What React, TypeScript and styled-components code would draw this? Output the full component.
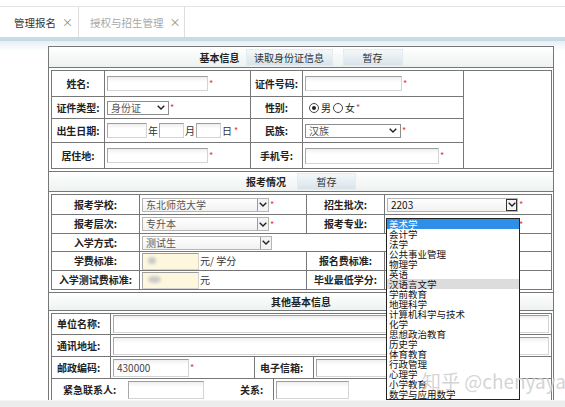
import styled, { createGlobalStyle } from 'styled-components';

const GlobalStyle = createGlobalStyle`
  html, body {
    margin: 0;
    padding: 0;
    background: #fff;
    overflow: hidden;
  }
  body {
    font-family: "Noto Sans CJK SC", "Liberation Sans", sans-serif;
    font-size: 10px;
    color: #222;
  }
`;

const Page = styled.div`
  width: 565px;
  height: 407px;
  overflow: hidden;
  position: relative;
`;

const TabBar = styled.div`
  margin-top: 6px;
  height: 30px;
  border-top: 1px solid #e4e4e4;
  border-bottom: 4px solid #c6dbe6;
  display: flex;
`;

const Tab = styled.div<{ $active?: boolean; $w: number }>`
  width: ${p => p.$w}px;
  box-sizing: border-box;
  display: flex;
  align-items: center;
  gap: 6px;
  padding-left: ${p => (p.$active ? 14 : 11)}px;
  border-right: 1px solid #dedede;
  color: ${p => (p.$active ? '#333' : '#a8a8a8')};
  font-size: 10.5px;
`;

const Close = styled.span`
  font-size: 11px;
  color: #888;
`;

const Content = styled.div`
  background: linear-gradient(#e6eff3 0, #fff 10px);
  padding-top: 5px;
`;

const Frame = styled.div`
  margin-left: 48px;
  width: 504px;
  border: 1px solid #777;
  border-bottom: none;
`;

const Section = styled.div`
  border-bottom: 1px solid #777;
`;

const SectionHead = styled.div<{ $h: number }>`
  height: ${p => p.$h}px;
  display: flex;
  align-items: center;
  justify-content: center;
  gap: 6px;
  background: linear-gradient(#ffffff, #edf2f1);
  border-bottom: 1px solid #777;
  font-weight: bold;
`;

const SectionBody = styled.div`
  padding: 2px;
`;

const Btn = styled.button<{ $w: number; $ml?: number }>`
  width: ${p => p.$w}px;
  height: 17px;
  margin-left: ${p => p.$ml ?? 0}px;
  padding: 0;
  border: none;
  background: linear-gradient(#f6f9fb, #d6e3ea);
  box-shadow: inset 0 0 0 1px #e4ecf0;
  font-family: inherit;
  font-size: 10px;
  color: #333;
`;

const Grid = styled.table`
  width: 100%;
  border-collapse: collapse;
  table-layout: fixed;
  line-height: 12px;
`;

const Col = styled.col<{ $w: number }>`
  width: ${p => p.$w}px;
`;

const Row = styled.tr<{ $h: number }>`
  height: ${p => p.$h}px;
`;

const Label = styled.td<{ $left?: boolean }>`
  border: 1px solid #777;
  padding: ${p => (p.$left ? '0 0 0 5px' : '0')};
  text-align: ${p => (p.$left ? 'left' : 'center')};
  font-weight: bold;
  color: #222;
  white-space: nowrap;
`;

const Value = styled.td`
  border: 1px solid #777;
  padding: 0 2px;
  white-space: nowrap;
  position: relative;
`;

const Line = styled.div`
  display: flex;
  align-items: center;
`;

const Field = styled.input<{ $w: number; $h?: number; $yellow?: boolean }>`
  display: block;
  box-sizing: border-box;
  width: ${p => p.$w}px;
  height: ${p => p.$h ?? 15}px;
  margin: 0;
  padding: 0 3px;
  border: 1px solid;
  border-color: #9c9c9c #d4d4d4 #d4d4d4 #a8a8a8;
  background: ${p =>
    p.$yellow ? '#fdf7de' : 'linear-gradient(#efefef, #ffffff 5px)'};
  font-family: inherit;
  font-size: 10px;
  color: #444;
  outline: none;
`;

const Blur = styled.span<{ $w: number }>`
  position: absolute;
  left: 6px;
  top: 50%;
  width: ${p => p.$w}px;
  height: 7px;
  margin-top: -4px;
  border-radius: 50%;
  background: #c9c9c9;
  filter: blur(1.5px);
`;

const FieldWrap = styled.span`
  position: relative;
  display: inline-flex;
`;

const Req = styled.span`
  color: #e23a3a;
  font-size: 9px;
  margin-left: 1px;
  line-height: 1;
`;

const Unit = styled.span`
  margin: 0 1px;
  color: #333;
`;

const Spacer = styled.span<{ $w: number }>`
  display: inline-block;
  width: ${p => p.$w}px;
  flex: none;
`;

const SelectBox = styled.div<{ $w: number; $boxed?: boolean; $focus?: boolean }>`
  box-sizing: border-box;
  width: ${p => p.$w}px;
  height: 14px;
  display: flex;
  align-items: center;
  justify-content: space-between;
  padding-left: 3px;
  border: 1px solid ${p => (p.$boxed ? '#b5b5b5' : '#8d8d8d')};
  background: ${p => (p.$boxed ? 'linear-gradient(#ffffff, #f1f1f1)' : '#fff')};
  color: ${p => (p.$focus ? '#111' : '#555')};
`;

const Arrow = styled.span<{ $boxed?: boolean; $focus?: boolean }>`
  box-sizing: border-box;
  width: ${p => (p.$boxed ? 11 : 14)}px;
  height: 12px;
  display: flex;
  align-items: center;
  justify-content: center;
  border-left: ${p => (p.$boxed ? `1px solid ${p.$focus ? '#333' : '#999'}` : 'none')};
  ${p => (p.$focus ? 'outline: 1px solid #333; outline-offset: -1px;' : '')}
  background: ${p => (p.$boxed ? '#f4f4f4' : 'transparent')};
`;

const Select = ({ w, text, boxed, focus }: { w: number; text: string; boxed?: boolean; focus?: boolean }) => (
  <SelectBox $w={w} $boxed={boxed} $focus={focus}>
    <span>{text}</span>
    <Arrow $boxed={boxed} $focus={focus}>
      <svg width="8" height="5" viewBox="0 0 8 5">
        <polyline points="0.7,0.7 4,4 7.3,0.7" fill="none" stroke="#222" strokeWidth="1.4" />
      </svg>
    </Arrow>
  </SelectBox>
);

const Radio = styled.span<{ $on?: boolean }>`
  box-sizing: border-box;
  width: 10px;
  height: 10px;
  border-radius: 50%;
  border: 1px solid #444;
  margin: 0 2px 0 0;
  display: inline-flex;
  align-items: center;
  justify-content: center;
  &::after {
    content: '';
    width: 4px;
    height: 4px;
    border-radius: 50%;
    background: ${p => (p.$on ? '#222' : 'transparent')};
  }
`;

const DropList = styled.ul`
  position: absolute;
  left: 1px;
  top: 3px;
  z-index: 5;
  width: 132px;
  margin: 0;
  padding: 0;
  list-style: none;
  border: 1px solid #222;
  background: #fff;
`;

const DropItem = styled.li<{ $sel?: boolean; $hover?: boolean }>`
  height: 10px;
  line-height: 10px;
  padding-left: 2px;
  font-size: 9.5px;
  color: ${p => (p.$sel ? '#fff' : '#111')};
  background: ${p => (p.$sel ? '#2f8fe8' : p.$hover ? '#dcdcdc' : 'transparent')};
`;

const Divider = styled.div`
  align-self: stretch;
  border-left: 1px solid #777;
`;

const SplitCell = styled.td`
  border: 1px solid #777;
  padding: 0;
`;

const SplitRow = styled.div`
  display: flex;
  align-items: center;
  height: 100%;
  min-height: 22px;
`;

const Seg = styled.div<{ $w: number; $pad?: number }>`
  width: ${p => p.$w}px;
  box-sizing: border-box;
  padding-left: ${p => p.$pad ?? 0}px;
  display: flex;
  align-items: center;
  flex: none;
`;

const BoldText = styled.span`
  font-weight: bold;
  color: #222;
`;

const Watermark = styled.div`
  position: absolute;
  left: 422px;
  top: 367px;
  z-index: 6;
  font-size: 19px;
  white-space: nowrap;
  color: rgba(175, 175, 175, 0.55);
  text-shadow: 0 0 1px rgba(255, 255, 255, 0.8);
  font-family: "Noto Sans CJK SC", "Liberation Sans", sans-serif;
`;

const BottomBar = styled.div`
  position: absolute;
  left: 0;
  right: 0;
  top: 400px;
  height: 7px;
  z-index: 7;
  background: #ececec;
  border-top: 1px solid #f4f4f4;
`;

const majors = [
  '美术学', '会计学', '法学', '公共事业管理', '物理学', '英语', '汉语言文学', '学前教育', '地理科学',
  '计算机科学与技术', '化学', '思想政治教育', '历史学', '体育教育', '行政管理', '心理学', '小学教育', '数学与应用数学',
];

export default function App() {
  return (
    <Page>
      <GlobalStyle />
      <TabBar>
        <Tab $active $w={79}>管理报名 <Close>×</Close></Tab>
        <Tab $w={106}>授权与招生管理 <Close>×</Close></Tab>
      </TabBar>
      <Content>
        <Frame>
          <Section>
            <SectionHead $h={20}>
              基本信息
              <Btn $w={87}>读取身份证信息</Btn>
              <Btn $w={60} $ml={4}>暂存</Btn>
            </SectionHead>
            <SectionBody>
              <Grid>
                <colgroup>
                  <Col $w={53} /><Col $w={146} /><Col $w={52} /><Col $w={161} /><Col $w={88} />
                </colgroup>
                <tbody>
                  <Row $h={26}>
                    <Label>姓名:</Label>
                    <Value><Line><Field $w={101} readOnly /><Req>*</Req></Line></Value>
                    <Label>证件号码:</Label>
                    <Value><Line><Field $w={97} readOnly /><Req>*</Req></Line></Value>
                    <Value rowSpan={4} />
                  </Row>
                  <Row $h={22}>
                    <Label>证件类型:</Label>
                    <Value><Line><Select w={62} text="身份证" /><Req>*</Req></Line></Value>
                    <Label>性别:</Label>
                    <Value>
                      <Line>
                        <Spacer $w={4} />
                        <Radio $on />男<Spacer $w={2} />
                        <Radio />女<Req>*</Req>
                      </Line>
                    </Value>
                  </Row>
                  <Row $h={24}>
                    <Label>出生日期:</Label>
                    <Value>
                      <Line>
                        <Field $w={40} readOnly /><Unit>年</Unit>
                        <Field $w={25} readOnly /><Unit>月</Unit>
                        <Field $w={25} readOnly /><Unit>日</Unit><Req>*</Req>
                      </Line>
                    </Value>
                    <Label>民族:</Label>
                    <Value><Line><Select w={96} text="汉族" /><Req>*</Req></Line></Value>
                  </Row>
                  <Row $h={26}>
                    <Label>居住地:</Label>
                    <Value><Line><Field $w={101} readOnly /><Req>*</Req></Line></Value>
                    <Label>手机号:</Label>
                    <Value><Line><Field $w={134} $h={16} readOnly /><Req>*</Req></Line></Value>
                  </Row>
                </tbody>
              </Grid>
            </SectionBody>
          </Section>

          <Section>
            <SectionHead $h={19}>
              报考情况
              <Btn $w={59} $ml={5}>暂存</Btn>
            </SectionHead>
            <SectionBody>
              <Grid>
                <colgroup>
                  <Col $w={88} /><Col $w={167} /><Col $w={78} /><Col $w={167} />
                </colgroup>
                <tbody>
                  <Row $h={20}>
                    <Label>报考学校:</Label>
                    <Value><Line><Select boxed w={127} text="东北师范大学" /><Req>*</Req></Line></Value>
                    <Label>招生批次:</Label>
                    <Value><Line><Select boxed focus w={131} text="2203" /><Req>*</Req></Line></Value>
                  </Row>
                  <Row $h={19}>
                    <Label>报考层次:</Label>
                    <Value><Line><Select boxed w={127} text="专升本" /><Req>*</Req></Line></Value>
                    <Label>报考专业:</Label>
                    <Value>
                      <Line><Spacer $w={131} /><Req>*</Req></Line>
                      <DropList>
                        {majors.map((m, i) => (
                          <DropItem key={m} $sel={i === 0} $hover={i === 6}>{m}</DropItem>
                        ))}
                      </DropList>
                    </Value>
                  </Row>
                  <Row $h={18}>
                    <Label>入学方式:</Label>
                    <Value colSpan={3}><Select boxed w={130} text="测试生" /></Value>
                  </Row>
                  <Row $h={19}>
                    <Label>学费标准:</Label>
                    <Value>
                      <Line>
                        <FieldWrap><Field $yellow $w={57} $h={17} readOnly /><Blur $w={8} /></FieldWrap>
                        <Unit>元/ 学分</Unit>
                      </Line>
                    </Value>
                    <Label>报名费标准:</Label>
                    <Value />
                  </Row>
                  <Row $h={19}>
                    <Label>入学测试费标准:</Label>
                    <Value>
                      <Line>
                        <FieldWrap><Field $yellow $w={57} $h={17} readOnly /><Blur $w={13} /></FieldWrap>
                        <Unit>元</Unit>
                      </Line>
                    </Value>
                    <Label>毕业最低学分:</Label>
                    <Value />
                  </Row>
                </tbody>
              </Grid>
            </SectionBody>
          </Section>

          <Section>
            <SectionHead $h={17}>其他基本信息</SectionHead>
            <SectionBody>
              <Grid>
                <colgroup>
                  <Col $w={59} /><Col $w={144} /><Col $w={59} /><Col $w={238} />
                </colgroup>
                <tbody>
                  <Row $h={21}>
                    <Label $left>单位名称:</Label>
                    <Value colSpan={3}><Field $w={436} $h={18} readOnly /></Value>
                  </Row>
                  <Row $h={22}>
                    <Label $left>通讯地址:</Label>
                    <Value colSpan={3}><Field $w={436} $h={18} readOnly /></Value>
                  </Row>
                  <Row $h={22}>
                    <Label $left>邮政编码:</Label>
                    <Value><Line><Field $w={76} $h={18} readOnly defaultValue="430000" /><Req>*</Req></Line></Value>
                    <Label $left>电子信箱:</Label>
                    <Value><Field $w={200} $h={18} readOnly /></Value>
                  </Row>
                  <Row $h={23}>
                    <SplitCell colSpan={4}>
                      <SplitRow>
                        <Seg $w={76} $pad={11}><BoldText>紧急联系人:</BoldText></Seg>
                        <Seg $w={112}><Field $w={76} $h={18} readOnly /></Seg>
                        <BoldText>关系:</BoldText>
                        <Seg $w={10} />
                        <Divider />
                        <Seg $w={120} $pad={2}><Field $w={73} $h={18} readOnly /></Seg>
                      </SplitRow>
                    </SplitCell>
                  </Row>
                  <Row $h={22}>
                    <Label $left />
                    <Value />
                    <Label $left />
                    <Value />
                  </Row>
                </tbody>
              </Grid>
            </SectionBody>
          </Section>
        </Frame>
      </Content>
      <Watermark>知乎 @chenyaya</Watermark>
      <BottomBar />
    </Page>
  );
}
